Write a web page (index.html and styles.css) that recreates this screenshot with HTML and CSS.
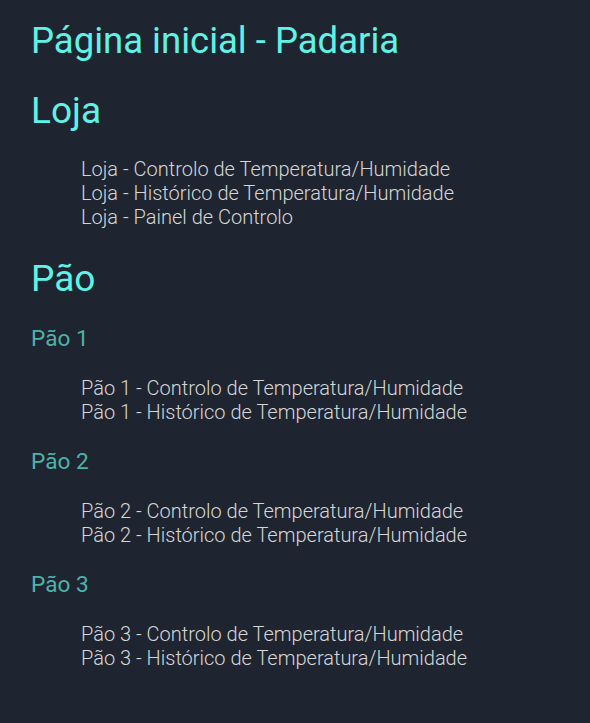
FILE: index.html
```html
<!DOCTYPE html>
<html lang="pt">
<head>
<meta charset="utf-8">
<title>Página inicial - Padaria</title>
<link rel="stylesheet" href="styles.css">
</head>
<body>
<main class="page">
  <h1 class="title">Página inicial - Padaria</h1>

  <section class="section">
    <h2 class="section-title">Loja</h2>
    <ul class="links links-main">
      <li><a href="#">Loja - Controlo de Temperatura/Humidade</a></li>
      <li><a href="#">Loja - Histórico de Temperatura/Humidade</a></li>
      <li><a href="#">Loja - Painel de Controlo</a></li>
    </ul>
  </section>

  <section class="section">
    <h2 class="section-title">Pão</h2>
    <h3 class="sub-title">Pão 1</h3>
    <ul class="links">
      <li><a href="#">Pão 1 - Controlo de Temperatura/Humidade</a></li>
      <li><a href="#">Pão 1 - Histórico de Temperatura/Humidade</a></li>
    </ul>
    <h3 class="sub-title">Pão 2</h3>
    <ul class="links">
      <li><a href="#">Pão 2 - Controlo de Temperatura/Humidade</a></li>
      <li><a href="#">Pão 2 - Histórico de Temperatura/Humidade</a></li>
    </ul>
    <h3 class="sub-title">Pão 3</h3>
    <ul class="links">
      <li><a href="#">Pão 3 - Controlo de Temperatura/Humidade</a></li>
      <li><a href="#">Pão 3 - Histórico de Temperatura/Humidade</a></li>
    </ul>
  </section>
</main>
</body>
</html>
```

FILE: styles.css
```css
html, body {
  margin: 0;
  padding: 0;
  background: #1f2530;
  min-height: 100%;
}
body {
  font-family: Roboto, "Liberation Sans", sans-serif;
  color: #d6d6d6;
}
.page {
  padding: 21px 30px 20px 31px;
}
.title {
  margin: 0 0 28px;
  font-size: 36.5px;
  line-height: 40px;
  font-weight: 400;
  color: #5ff3e6;
}
.section-title {
  margin: 0 0 24px;
  font-size: 37px;
  line-height: 44px;
  font-weight: 400;
  color: #5ff3e6;
}
.sub-title {
  margin: 0 0 23px;
  font-size: 22.6px;
  line-height: 28px;
  font-weight: 400;
  color: #4db3a8;
}
.links {
  list-style: none;
  margin: 0 0 24px;
  padding: 0 0 0 50px;
}
.links-main {
  margin-bottom: 28px;
}
.links li {
  font-size: 20px;
  line-height: 24px;
  font-weight: 300;
}
.links a {
  color: #d6d6d6;
  text-decoration: none;
}
```
